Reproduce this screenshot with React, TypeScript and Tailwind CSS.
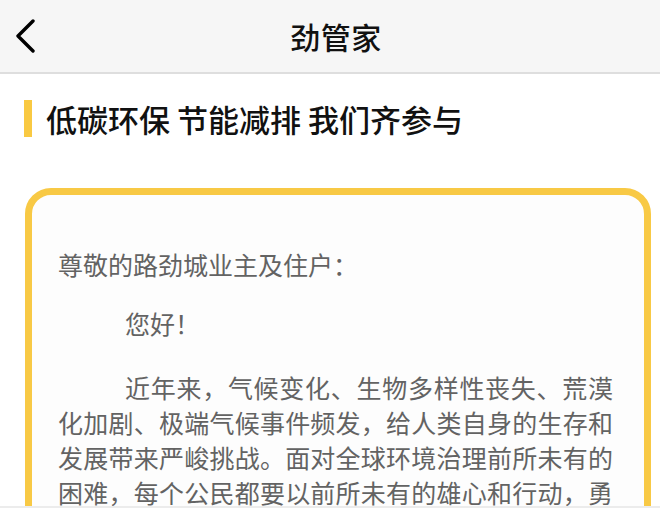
import React from 'react';

const BODY = [
  '近年来，气候变化、生物多样性丧失、荒漠化加剧、极端气候事件频发，给人类自身的生存和发展带来严峻挑战。面对全球环境治理前所未有的困难，每个公民都要以前所未有的雄心和行动，勇于担当，勠力同心，共同构建人与自然生命共同体。',
];

export default function App() {
  return (
    <main className="min-h-screen bg-white font-['Noto_Sans_CJK_SC','Noto_Sans',sans-serif]">
      {/* Nav bar */}
      <header className="h-[74px] bg-[#f6f6f6] border-b-2 border-[#dedede] grid grid-cols-[1fr_auto_1fr] items-center">
        <button className="justify-self-start ml-[15px] w-[20px] h-[34px] text-black" aria-label="返回">
          <svg viewBox="0 0 20 34" width="20" height="34" fill="none" stroke="currentColor" strokeWidth="3.4" strokeLinecap="round" strokeLinejoin="round">
            <path d="M18 2 L3 17 L18 32" />
          </svg>
        </button>
        <h1 className="pl-[12px] text-[30px] font-medium text-[#111] leading-none tracking-[0.5px]">劲管家</h1>
        <div />
      </header>

      {/* Section title */}
      <div className="mt-[26px] ml-[24px] flex items-center">
        <span className="w-[8px] h-[37px] bg-[#f9c942]" />
        <h2 className="ml-[14px] text-[31px] font-medium text-[#111] leading-none">
          低碳环保 节能减排 我们齐参与
        </h2>
      </div>

      {/* Letter card */}
      <section className="mt-[51px] ml-[25px] mr-[9px] border-[7px] border-[#f8c945] rounded-[26px] bg-[#fdfdfd] pl-[26px] pr-[31px] pt-[52px] pb-10 text-[25px] leading-[35px] text-[#636363]">
        <p className="mb-[24px]">尊敬的路劲城业主及住户：</p>
        <p className="mb-[29px] indent-[67px]">您好！</p>
        {BODY.map(text => (
          <p key={text} className="indent-[67px] text-justify">
            {text}
          </p>
        ))}
      </section>

      {/* Bottom edge of the next panel */}
      <div className="fixed bottom-0 left-0 right-0 h-[2px] bg-[#ececec]" />
    </main>
  );
}
